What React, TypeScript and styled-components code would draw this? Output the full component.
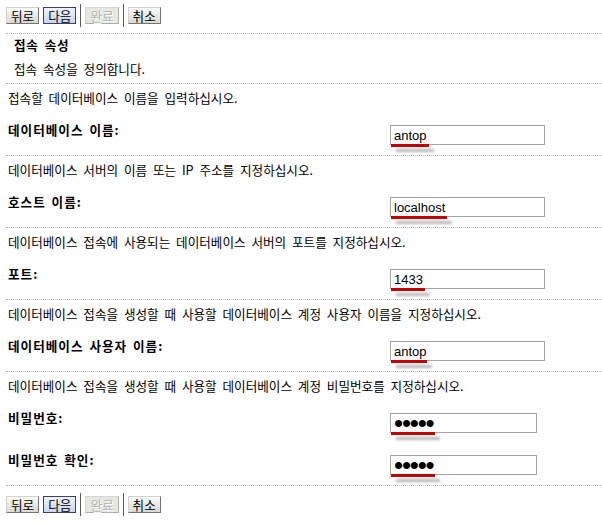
import styled, { createGlobalStyle } from "styled-components";

interface IField {
  label: string;
  value: string;
  mark: number;
  password?: boolean;
}
interface IRow {
  desc: string;
  fields: IField[];
}

const rows: IRow[] = [
  {
    desc: "접속할 데이터베이스 이름을 입력하십시오.",
    fields: [{ label: "데이터베이스 이름:", value: "antop", mark: 38 }],
  },
  {
    desc: "데이터베이스 서버의 이름 또는 IP 주소를 지정하십시오.",
    fields: [{ label: "호스트 이름:", value: "localhost", mark: 56 }],
  },
  {
    desc: "데이터베이스 접속에 사용되는 데이터베이스 서버의 포트를 지정하십시오.",
    fields: [{ label: "포트:", value: "1433", mark: 34 }],
  },
  {
    desc: "데이터베이스 접속을 생성할 때 사용할 데이터베이스 계정 사용자 이름을 지정하십시오.",
    fields: [{ label: "데이터베이스 사용자 이름:", value: "antop", mark: 36 }],
  },
  {
    desc: "데이터베이스 접속을 생성할 때 사용할 데이터베이스 계정 비밀번호를 지정하십시오.",
    fields: [
      { label: "비밀번호:", value: "antop", mark: 44, password: true },
      { label: "비밀번호 확인:", value: "antop", mark: 44, password: true },
    ],
  },
];

const GlobalStyle = createGlobalStyle`
  body {
    margin: 0;
    background: #fff;
    color: #000;
    font-family: "Noto Sans CJK KR", "Liberation Sans", sans-serif;
    font-size: 12.6px;
  }
`;

const Page = styled.div`
  width: 596px;
  padding-left: 6px;
`;

const Toolbar = styled.div<{ $bottom?: boolean }>`
  display: flex;
  align-items: center;
  gap: 4px;
  height: ${(p) => (p.$bottom ? "37px" : "31px")};
  padding-bottom: ${(p) => (p.$bottom ? "0" : "2px")};
  border-top: ${(p) => (p.$bottom ? "1px dotted #b4b4b4" : "none")};
`;

const Button = styled.button<{ $variant?: "focused" | "disabled" }>`
  height: 17px;
  padding: 0 4px;
  margin: 0;
  font-family: "Noto Sans CJK KR", sans-serif;
  font-size: 12.6px;
  line-height: 15px;
  color: ${(p) => (p.$variant === "disabled" ? "#b2b2ae" : "#000")};
  text-shadow: ${(p) => (p.$variant === "disabled" ? "1px 1px 0 #fff" : "none")};
  border: 1px solid;
  border-color: ${(p) =>
    p.$variant === "focused"
      ? "#34446f"
      : p.$variant === "disabled"
      ? "#d6d6d2 #acaca8 #acaca8 #d6d6d2"
      : "#d2d2ce #74746f #74746f #d2d2ce"};
  background: ${(p) =>
    p.$variant === "focused"
      ? "linear-gradient(#eef3fb, #c8d6ee)"
      : p.$variant === "disabled"
      ? "#e6e6e2"
      : "linear-gradient(#fbfbf8, #d9d9d1)"};
  border-radius: 0;
`;

const Separator = styled.span`
  width: 1px;
  height: 23px;
  background: #5c5c5c;
`;

const Header = styled.div`
  border-top: 1px dotted #b4b4b4;
  padding: 5px 0 8px 8px;
  line-height: 12px;
`;

const HeaderTitle = styled.div`
  font-weight: bold;
  letter-spacing: 0.6px;
  word-spacing: 3px;
`;

const HeaderText = styled.div`
  margin-top: 12px;
  word-spacing: 3px;
`;

const Row = styled.section`
  border-top: 1px dotted #b4b4b4;
  padding: 8px 0 10px 2px;
`;

const Desc = styled.div`
  line-height: 12px;
  word-spacing: 3px;
  white-space: nowrap;
`;

const FieldList = styled.div`
  display: flex;
  flex-direction: column;
  gap: 21px;
  padding-top: 20px;
`;

const Field = styled.div`
  display: flex;
  align-items: flex-start;
`;

const Label = styled.label`
  width: 382px;
  font-weight: bold;
  line-height: 12px;
  letter-spacing: 1px;
  word-spacing: 2px;
`;

const InputWrap = styled.div`
  position: relative;
  margin-top: 1px;
`;

const Input = styled.input<{ $password?: boolean }>`
  display: block;
  box-sizing: border-box;
  width: ${(p) => (p.$password ? "147px" : "155px")};
  height: 20px;
  margin: 0;
  padding: 0 3px;
  border: 1px solid #a6a6a1;
  outline: none;
  background: #fff;
  color: #000;
  font-family: "Liberation Sans", Arial, sans-serif;
  font-size: ${(p) => (p.$password ? "26px" : "13px")};
  letter-spacing: ${(p) => (p.$password ? "-1.2px" : "0")};
`;

const Mark = styled.span`
  position: absolute;
  left: 1px;
  bottom: -2px;
  height: 3px;
  background: #c40000;
  box-shadow: 5px 5px 3px rgba(0, 0, 0, 0.3);
`;

function Buttons() {
  return (
    <>
      <Button>뒤로</Button>
      <Button $variant="focused">다음</Button>
      <Separator />
      <Button $variant="disabled" disabled>
        완료
      </Button>
      <Separator />
      <Button>취소</Button>
    </>
  );
}

function App() {
  return (
    <Page>
      <GlobalStyle />
      <Toolbar>
        <Buttons />
      </Toolbar>
      <Header>
        <HeaderTitle>접속 속성</HeaderTitle>
        <HeaderText>접속 속성을 정의합니다.</HeaderText>
      </Header>
      {rows.map((row) => (
        <Row key={row.desc}>
          <Desc>{row.desc}</Desc>
          <FieldList>
            {row.fields.map((f) => (
              <Field key={f.label}>
                <Label>{f.label}</Label>
                <InputWrap>
                  <Input
                    type={f.password ? "password" : "text"}
                    $password={f.password}
                    defaultValue={f.value}
                    readOnly
                  />
                  <Mark style={{ width: f.mark }} />
                </InputWrap>
              </Field>
            ))}
          </FieldList>
        </Row>
      ))}
      <Toolbar $bottom>
        <Buttons />
      </Toolbar>
    </Page>
  );
}

export default App;
